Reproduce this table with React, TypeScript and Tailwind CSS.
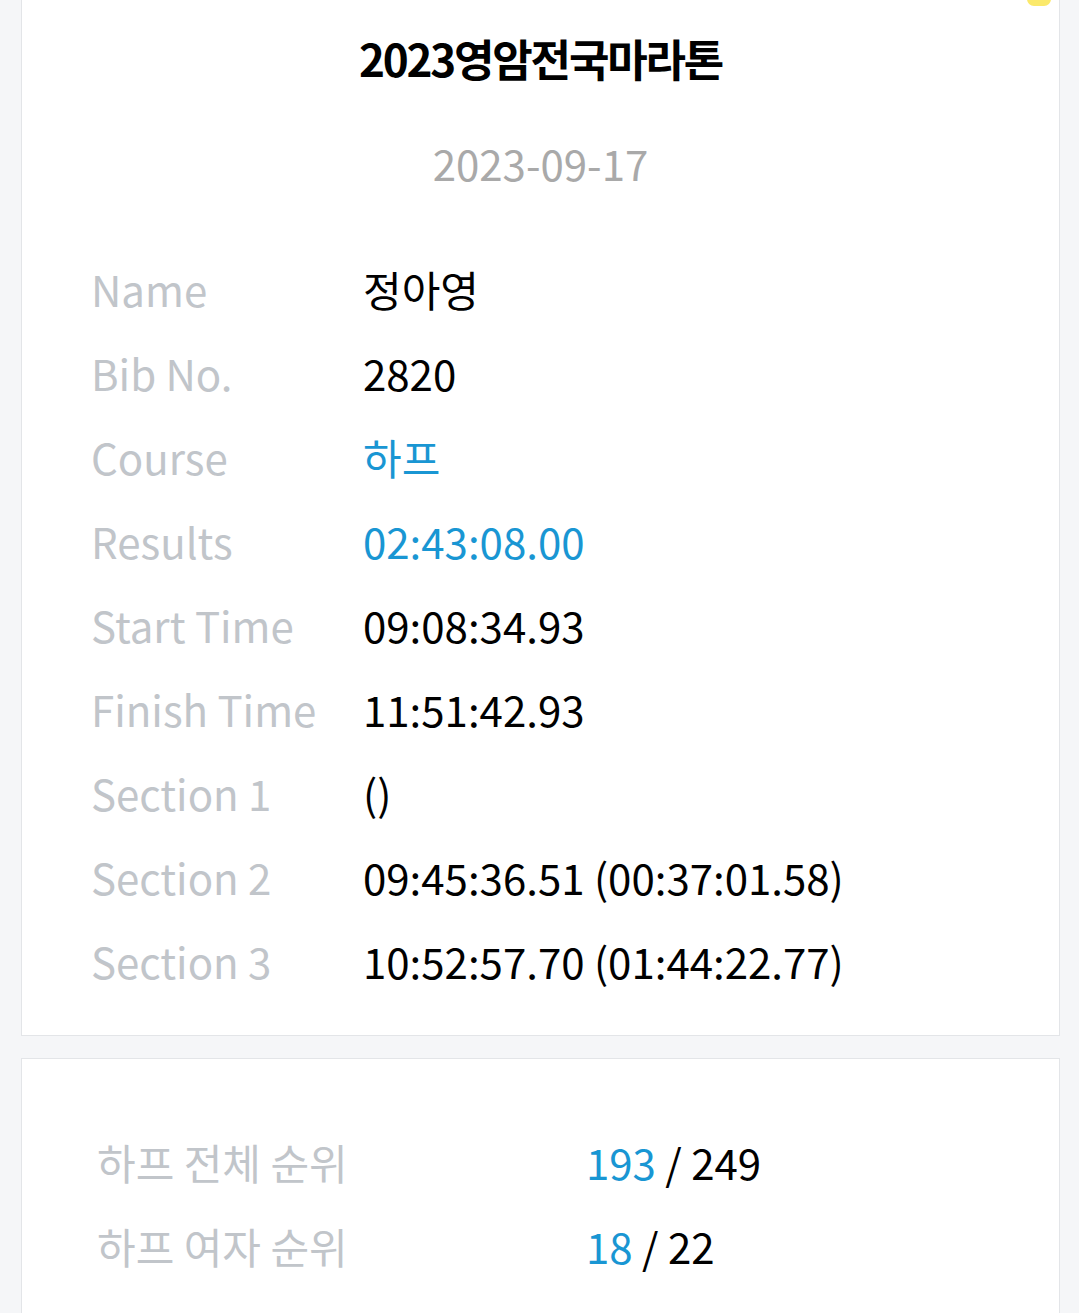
import React from "react";

const rows: { label: string; value: React.ReactNode; blue?: boolean }[] = [
  { label: "Name", value: "정아영" },
  { label: "Bib No.", value: "2820" },
  { label: "Course", value: "하프", blue: true },
  { label: "Results", value: "02:43:08.00", blue: true },
  { label: "Start Time", value: "09:08:34.93" },
  { label: "Finish Time", value: "11:51:42.93" },
  { label: "Section 1", value: "()" },
  { label: "Section 2", value: "09:45:36.51 (00:37:01.58)" },
  { label: "Section 3", value: "10:52:57.70 (01:44:22.77)" },
];

export default function App() {
  return (
    <div
      className="relative min-h-[1313px] w-[1079px] overflow-hidden bg-[#f5f6f8]"
      style={{ fontFamily: '"Noto Sans CJK KR", "Noto Sans", sans-serif' }}
    >
      <div className="absolute right-[28px] top-[-8px] h-[14px] w-[24px] rounded-full bg-[#fbe96b]" />

      <div className="ml-[21px] mr-[19px] -mt-px border border-[#e3e5e8] bg-white pb-[32px]">
        <div className="pt-[28px] text-center text-[44px] font-bold leading-[60px] tracking-[-2.2px] text-black">
          2023영암전국마라톤
        </div>
        <div className="mt-[45px] text-center text-[42px] leading-[60px] text-[#a9a9a9]">
          2023-09-17
        </div>
        <div className="mt-[54px] flex flex-col pl-[69px]">
          {rows.map((r) => (
            <div key={r.label} className="flex h-[84px] items-center text-[42px] leading-[60px]">
              <div className="w-[272px] shrink-0 text-[#c1c5ca]">{r.label}</div>
              <div className={r.blue ? "text-[#1996d3]" : "text-black"}>{r.value}</div>
            </div>
          ))}
        </div>
      </div>

      <div className="ml-[21px] mr-[19px] mt-[22px] border border-[#e3e5e8] bg-white pb-[60px] pt-[61px]">
        <div className="flex flex-col pl-[75px]">
          <div className="flex h-[84px] items-center text-[42px] leading-[60px]">
            <div className="w-[489px] shrink-0 text-[#c1c5ca]">하프 전체 순위</div>
            <div>
              <span className="text-[#1996d3]">193</span>
              <span className="text-black"> / 249</span>
            </div>
          </div>
          <div className="flex h-[84px] items-center text-[42px] leading-[60px]">
            <div className="w-[489px] shrink-0 text-[#c1c5ca]">하프 여자 순위</div>
            <div>
              <span className="text-[#1996d3]">18</span>
              <span className="text-black"> / 22</span>
            </div>
          </div>
        </div>
      </div>
    </div>
  );
}
